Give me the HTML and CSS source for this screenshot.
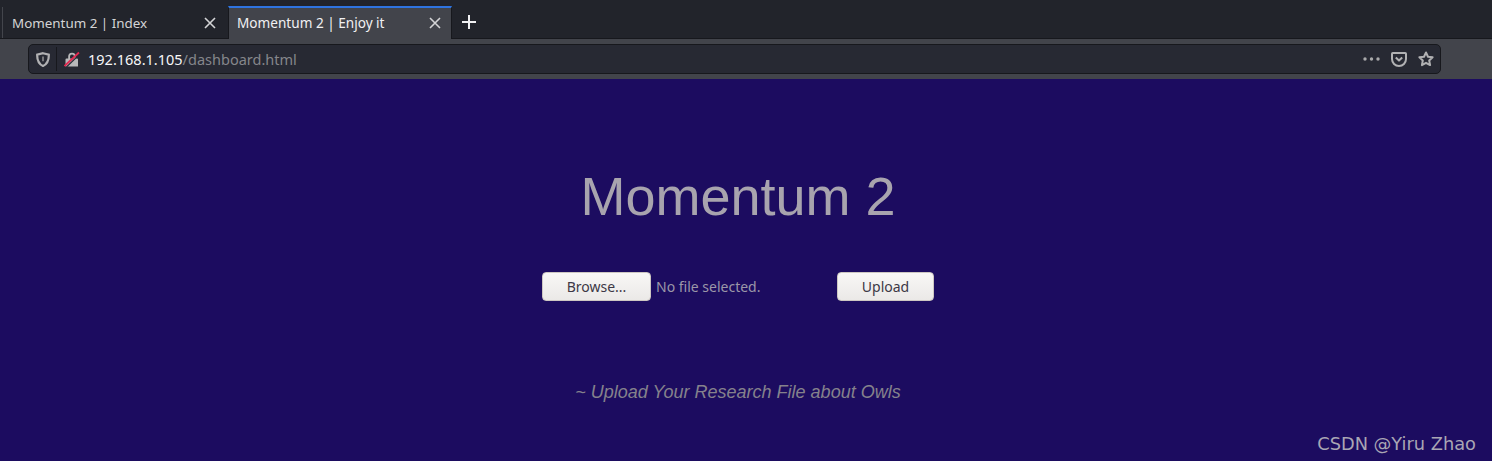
FILE: index.html
```html
<!DOCTYPE html>
<html lang="en">
<head>
    <meta charset="UTF-8">
    <title>Momentum 2 | Enjoy it</title>
    <link rel="stylesheet" href="styles.css">
</head>
<body>
    <div class="tabbar">
        <div class="tab">
            <span class="tab-title">Momentum 2 | Index</span>
            <svg class="tab-close" width="12" height="12" viewBox="0 0 12 12"><path d="M1 1l10 10M11 1L1 11"/></svg>
        </div>
        <div class="tab tab-active">
            <span class="tab-title">Momentum 2 | Enjoy it</span>
            <svg class="tab-close" width="12" height="12" viewBox="0 0 12 12"><path d="M1 1l10 10M11 1L1 11"/></svg>
        </div>
        <svg class="new-tab" width="14" height="14" viewBox="0 0 14 14"><path d="M7 0v14M0 7h14"/></svg>
    </div>

    <div class="toolbar">
        <div class="urlbar">
            <svg class="shield" width="14" height="15" viewBox="0 0 14 15">
                <path d="M7 1.200L12.800 2.600C13 8 11 12 7 14C3 12 1 8 1.200 2.600Z" fill="none" stroke="#b1b1b3" stroke-width="2.200"/>
                <path d="M6.200 4.500h1.600v4.800H6.200z" fill="#8d8d90"/>
            </svg>
            <span class="url-sep"></span>
            <svg class="lock" width="16" height="16" viewBox="0 0 16 16">
                <path d="M3 7.500h1.200V5.500a3.800 3.800 0 0 1 7.600 0v2H13a1 1 0 0 1 1 1V15.500H1.500V8.500a1 1 0 0 1 1-1zM6 7.500h4V5.500a2 2 0 0 0-4 0z" fill="#b8b8ba"/>
                <path d="M2.500 16L16 3" stroke="#272933" stroke-width="1.200"/>
                <path d="M.5 15L15 1.500" stroke="#e22850" stroke-width="1.800"/>
            </svg>
            <span class="url-text"><span class="url-host">192.168.1.105</span>/dashboard.html</span>
            <span class="url-actions">
                <svg width="17" height="4" viewBox="0 0 17 4"><circle cx="2" cy="2" r="1.700"/><circle cx="8.500" cy="2" r="1.700"/><circle cx="15" cy="2" r="1.700"/></svg>
                <svg class="pocket" width="16" height="15" viewBox="0 0 16 15"><path d="M1.800 1h12.400a.8.8 0 0 1 .8.8V7a7 7 0 0 1-14 0V1.800a.8.8 0 0 1 .8-.8z"/><path d="M4.800 5.600L8 8.600l3.200-3"/></svg>
                <svg class="star" width="16" height="16" viewBox="0 0 16 16"><path d="M8 1.500l2 4.200 4.600.6-3.400 3.200.9 4.600L8 11.800l-4.100 2.300.9-4.600L1.400 6.300 6 5.700z"/></svg>
            </span>
        </div>
    </div>

    <main class="page">
        <h1>Momentum 2</h1>
        <form class="upload-form">
            <button type="button" class="btn btn-browse">Browse...</button>
            <span class="file-name">No file selected.</span>
            <button type="button" class="btn btn-upload">Upload</button>
        </form>
        <p class="note">~ Upload Your Research File about Owls</p>
        <div class="watermark">CSDN @Yiru Zhao</div>
    </main>
</body>
</html>
```

FILE: styles.css
```css
html, body {
    height: 100%;
}
body {
    margin: 0;
    display: flex;
    flex-direction: column;
    overflow: hidden;
    font-family: 'Noto Sans', sans-serif;
    background-color: #1c0c60;
}
.tabbar {
    display: flex;
    align-items: flex-end;
    height: 39px;
    box-sizing: border-box;
    padding-left: 2px;
    background-color: #22242b;
    border-bottom: 1px solid #17181d;
}
.tab {
    display: flex;
    align-items: center;
    justify-content: space-between;
    box-sizing: border-box;
    width: 226px;
    height: 31px;
    padding: 0 12px 0 9px;
    color: #d4d4d6;
    font-size: 13.4px;
    border-left: 1px solid #43454c;
}
.tab-active {
    width: 224px;
    height: 33px;
    margin-bottom: -1px;
    padding: 0 10px 2px 8px;
    color: #f1f1f3;
    font-size: 13.6px;
    background-color: #42444b;
    border-left: 1px solid #17181d;
    border-right: 1px solid #17181d;
    border-top: 2px solid #2f74e0;
}
.tab-close {
    fill: none;
    stroke: #d4d4d6;
    stroke-width: 1.6;
}
.new-tab {
    margin: 0 0 9px 10px;
    fill: none;
    stroke: #f1f1f3;
    stroke-width: 2;
}
.toolbar {
    height: 40px;
    box-sizing: border-box;
    padding: 5px 51px 5px 28px;
    background-color: #42444b;
}
.urlbar {
    display: flex;
    align-items: center;
    height: 30px;
    box-sizing: border-box;
    padding: 0 6px 0 7px;
    background-color: #272933;
    border: 1px solid #17181d;
    border-radius: 5px;
}
.shield {
    margin-right: 6px;
}
.url-sep {
    width: 1px;
    height: 24px;
    margin-right: 7px;
    background-color: #17181d;
}
.url-text {
    margin-left: 8px;
    color: #85868b;
    font-size: 14.5px;
}
.url-host {
    color: #f7f7f9;
}
.url-actions {
    display: flex;
    align-items: center;
    gap: 11px;
    margin-left: auto;
    fill: #a9a9ab;
}
.pocket, .star {
    fill: none;
    stroke: #b1b1b3;
    stroke-width: 2;
    stroke-linejoin: round;
}
.page {
    position: relative;
    flex: 1;
    display: flex;
    flex-direction: column;
    align-items: center;
    padding-right: 16px;
    font-family: 'Liberation Sans', Arial, sans-serif;
}
.page h1 {
    margin: 85px 0 0;
    color: #a8a4ae;
    font-size: 54px;
    font-weight: 400;
    line-height: 64px;
}
.upload-form {
    display: flex;
    align-items: center;
    margin-top: 44px;
    font-family: 'Noto Sans', sans-serif;
    font-size: 14px;
}
.btn {
    box-sizing: border-box;
    height: 29px;
    padding: 0;
    color: #3d3846;
    font-family: inherit;
    font-size: 14px;
    background: linear-gradient(#f8f7f6, #ebe9e7);
    border: 1px solid #cdc7c2;
    border-radius: 4px;
}
.btn-browse {
    width: 109px;
}
.btn-upload {
    width: 97px;
}
.file-name {
    width: 186px;
    box-sizing: border-box;
    padding-left: 5px;
    color: #9b97a8;
}
.note {
    margin: 80px 0 0;
    color: #85828c;
    font-size: 18px;
    font-style: italic;
    line-height: 22px;
}
.watermark {
    position: absolute;
    right: 16px;
    bottom: 7px;
    color: #a9a6b4;
    font-family: 'DejaVu Sans', sans-serif;
    font-size: 17.8px;
}
```
